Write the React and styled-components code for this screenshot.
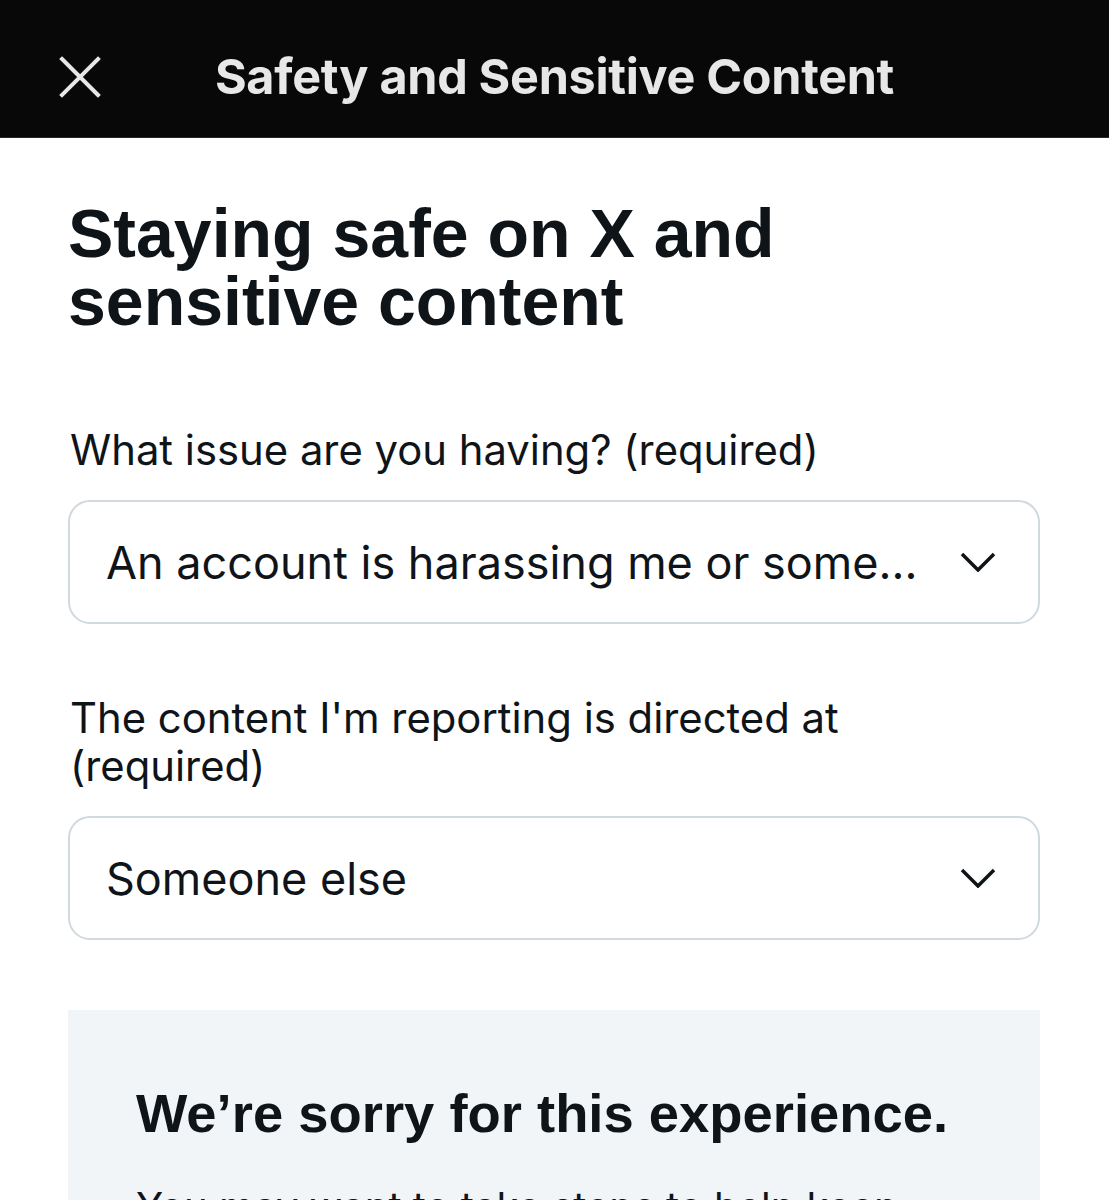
import React from 'react';
import styled, { createGlobalStyle } from 'styled-components';

const GlobalStyle = createGlobalStyle`
  html, body {
    margin: 0;
    padding: 0;
    background: #ffffff;
  }
  body {
    font-family: Inter, "Liberation Sans", sans-serif;
    color: #0f1419;
  }
`;

const Page = styled.div`
  width: 1109px;
  height: 1200px;
  overflow: hidden;
  background: #ffffff;
`;

const TopBar = styled.header`
  box-sizing: border-box;
  height: 138px;
  padding-top: 16px;
  background: #080808;
  border-bottom: 1px solid #2a2a2a;
  display: grid;
  grid-template-columns: 160px 1fr 160px;
  align-items: center;
`;

const CloseButton = styled.button`
  width: 160px;
  height: 100px;
  padding: 0;
  border: none;
  background: transparent;
  display: flex;
  align-items: center;
  justify-content: center;
  cursor: pointer;
`;

const BarTitle = styled.h1`
  margin: 0;
  text-align: center;
  font-family: Inter, "Liberation Sans", sans-serif;
  font-weight: 700;
  font-size: 48.5px;
  letter-spacing: -0.3px;
  color: #e7e7e7;
  white-space: nowrap;
`;

const Content = styled.main`
  padding: 61px 69px 0 68px;
`;

const PageHeading = styled.h2`
  margin: 0 0 91px;
  font-family: "Liberation Sans", Arial, sans-serif;
  font-weight: 700;
  font-size: 68px;
  line-height: 68px;
  color: #0f1419;
`;

const Field = styled.div`
  margin-bottom: ${p => p.gap || 0}px;
`;

const Label = styled.div`
  font-size: 41.8px;
  line-height: 48px;
  color: #0f1419;
  padding-left: 2px;
  margin-bottom: 26px;
  white-space: nowrap;
`;

const SelectBox = styled.div`
  height: 124px;
  box-sizing: border-box;
  border: 2px solid #cfd9de;
  border-radius: 22px;
  display: flex;
  align-items: center;
  justify-content: space-between;
  padding: 0 42px 0 36px;
`;

const SelectValue = styled.span`
  font-size: 45px;
  color: #0f1419;
  white-space: nowrap;
`;

const InfoCard = styled.section`
  background: #f2f5f8;
  padding: 72px 68px 0;
  height: 400px;
`;

const CardHeading = styled.h3`
  margin: 0 0 35px;
  font-family: "Liberation Sans", Arial, sans-serif;
  font-weight: 700;
  font-size: 54.4px;
  line-height: 64px;
  color: #0f1419;
  white-space: nowrap;
`;

const CardText = styled.p`
  margin: 0;
  font-size: 40px;
  line-height: 52px;
  color: #0f1419;
`;

const CloseIcon = () => (
  <svg width="42" height="42" viewBox="0 0 42 42">
    <path d="M3 3 L39 39 M39 3 L3 39" stroke="#e7e7e7" strokeWidth="4" strokeLinecap="square" fill="none" />
  </svg>
);

const Chevron = () => (
  <svg width="36" height="20" viewBox="0 0 36 20">
    <path d="M2 2 L18 18 L34 2" stroke="#0f1419" strokeWidth="3.5" fill="none" strokeLinejoin="miter" />
  </svg>
);

const Select = ({ value }) => (
  <SelectBox>
    <SelectValue>{value}</SelectValue>
    <Chevron />
  </SelectBox>
);

export default function App() {
  return (
    <Page>
      <GlobalStyle />
      <TopBar>
        <CloseButton aria-label="Close">
          <CloseIcon />
        </CloseButton>
        <BarTitle>Safety and Sensitive Content</BarTitle>
        <div />
      </TopBar>
      <Content>
        <PageHeading>
          Staying safe on X and
          <br />
          sensitive content
        </PageHeading>

        <Field gap={70}>
          <Label>What issue are you having? (required)</Label>
          <Select value="An account is harassing me or some..." />
        </Field>

        <Field gap={70}>
          <Label>
            The content I'm reporting is directed at
            <br />
            (required)
          </Label>
          <Select value="Someone else" />
        </Field>

        <InfoCard>
          <CardHeading>We’re sorry for this experience.</CardHeading>
          <CardText>You may want to take steps to help keep yourself safe.</CardText>
        </InfoCard>
      </Content>
    </Page>
  );
}
